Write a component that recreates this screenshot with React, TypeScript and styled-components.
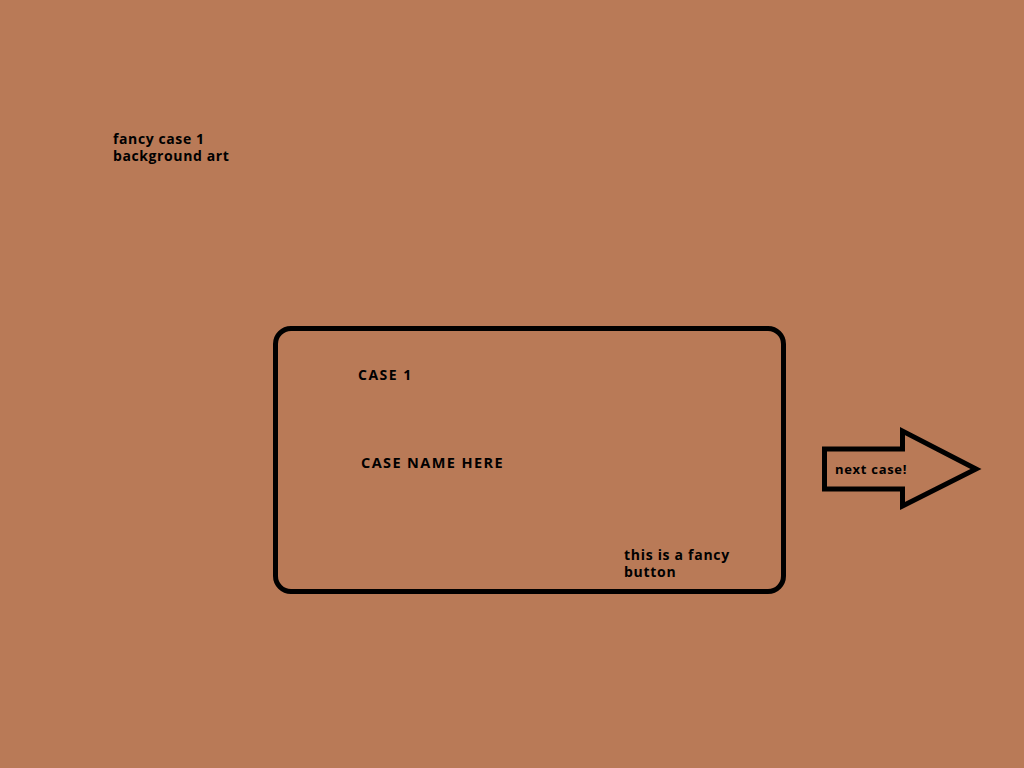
import styled, { createGlobalStyle } from "styled-components";

const GlobalStyle = createGlobalStyle`
  html, body {
    margin: 0;
    padding: 0;
    background-color: #b97a57;
  }
  * {
    box-sizing: border-box;
  }
`;

const Page = styled.div`
  width: 1024px;
  min-height: 768px;
  background-color: #b97a57;
  color: #000000;
  font-family: "Open Sans", Lato, sans-serif;
  font-weight: 700;
  font-size: 14px;
  line-height: 17px;
  letter-spacing: 0.6px;
  padding-top: 130px;
  display: flex;
  flex-direction: column;
`;

const Note = styled.div`
  margin-left: 113px;
  width: 140px;
`;

const Row = styled.div`
  display: flex;
  align-items: flex-start;
  gap: 33px;
  margin-top: 162px;
  margin-left: 273px;
`;

const Card = styled.div`
  width: 513px;
  height: 268px;
  border: 5px solid #000000;
  border-radius: 18px;
  padding: 35px 0 0 80px;
  display: flex;
  flex-direction: column;
`;

const CaseNumber = styled.div`
  font-size: 14px;
  letter-spacing: 1.5px;
`;

const CaseName = styled.div`
  margin-top: 71px;
  margin-left: 3px;
  font-size: 14.5px;
  letter-spacing: 1.4px;
`;

const FancyButton = styled.div`
  margin-top: 75px;
  margin-left: 266px;
  width: 140px;
  letter-spacing: 0.7px;
  background: transparent;
  cursor: pointer;
`;

const ArrowButton = styled.div`
  position: relative;
  width: 168px;
  height: 90px;
  margin-top: 99px;
  display: flex;
  align-items: center;
  padding-left: 16px;
  padding-bottom: 2px;
  cursor: pointer;

  & svg {
    position: absolute;
    inset: 0;
  }
`;

const ArrowLabel = styled.span`
  position: relative;
  font-size: 13px;
  letter-spacing: 0.7px;
`;

const App = () => {
  return (
    <>
      <GlobalStyle />
      <Page>
        <Note>
          fancy case 1
          <br />
          background art
        </Note>
        <Row>
          <Card>
            <CaseNumber>CASE 1</CaseNumber>
            <CaseName>CASE NAME HERE</CaseName>
            <FancyButton>
              this is a fancy
              <br />
              button
            </FancyButton>
          </Card>
          <ArrowButton>
            <svg width="168" height="90" viewBox="0 0 168 90">
              <path
                d="M5.5 24 H83.5 V6 L157 44 L83.5 81 V64 H5.5 Z"
                fill="none"
                stroke="#000000"
                strokeWidth="5"
                strokeLinejoin="miter"
              />
            </svg>
            <ArrowLabel>next case!</ArrowLabel>
          </ArrowButton>
        </Row>
      </Page>
    </>
  );
};

export default App;
